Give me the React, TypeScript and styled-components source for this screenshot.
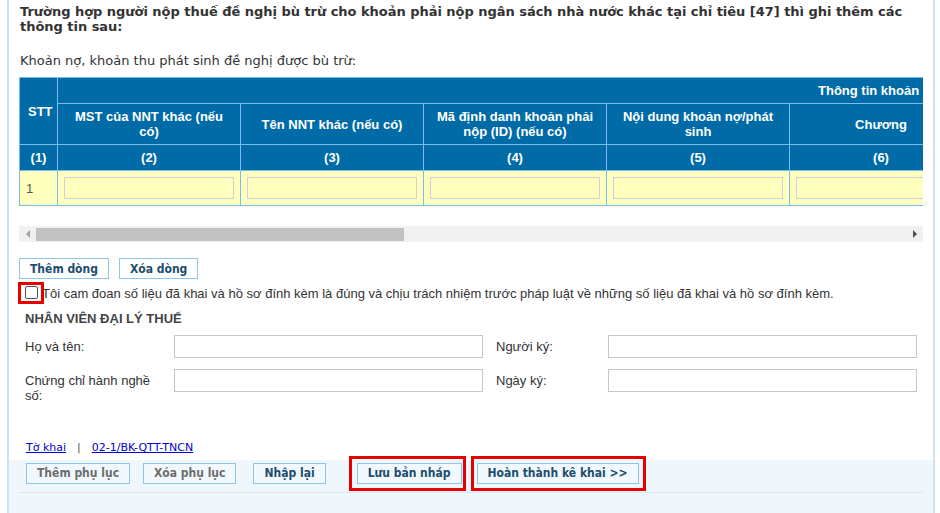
import React from 'react'
import styled, { createGlobalStyle } from 'styled-components'

const GlobalStyle = createGlobalStyle`
  html, body {
    margin: 0;
    padding: 0;
    background: #fff;
  }
  body {
    font-family: "Liberation Sans", Arial, sans-serif;
    color: #333;
  }
`

const Page = styled.div`
  width: 940px;
  height: 513px;
  overflow: hidden;
  box-sizing: border-box;
  padding: 0 5px 0 7px;
`

const Panel = styled.div`
  height: 100%;
  border-left: 2px solid #cbe3f6;
  border-right: 2px solid #cbe3f6;
  display: flex;
  flex-direction: column;
`

const Content = styled.div`
  padding: 0 10px;
  display: flex;
  flex-direction: column;
`

const Title = styled.div`
  font-family: "DejaVu Sans", Verdana, sans-serif;
  font-weight: bold;
  font-size: 13px;
  line-height: 15px;
  letter-spacing: -0.03px;
  color: #333;
  margin: 4px 0 0 1px;
`

const Subtitle = styled.div`
  font-family: "DejaVu Sans", Verdana, sans-serif;
  font-size: 13px;
  line-height: 15px;
  color: #333;
  margin: 19px 0 0 1px;
`

const TableWrap = styled.div`
  margin-top: 9px;
  width: 904px;
  overflow: hidden;
`

const Table = styled.table`
  border-collapse: collapse;
  table-layout: fixed;
  width: 1136px;
  font-size: 13px;
`

const Head = styled.th<{ $h?: number; $pl?: number }>`
  background: #006ba6;
  color: #fff;
  font-weight: bold;
  font-size: 13px;
  line-height: 15px;
  border: 1px solid #78bdf0;
  height: ${p => p.$h ?? 26}px;
  padding: 0 ${p => p.$pl ? 0 : 8}px 0 ${p => p.$pl ?? 8}px;
  text-align: ${p => p.$pl ? 'left' : 'center'};
  white-space: ${p => p.$pl ? 'nowrap' : 'normal'};
  vertical-align: middle;
  box-sizing: border-box;
`

const Cell = styled.td`
  background: #ffffbe;
  border: 1px solid #78bdf0;
  height: 35px;
  padding: 0 6px;
  color: #555;
  font-size: 13px;
  box-sizing: border-box;
`

const CellInput = styled.input`
  display: block;
  width: 100%;
  height: 22px;
  box-sizing: border-box;
  border: 1px solid #cfcfe0;
  background: #ffffbe;
  margin: 0;
  padding: 0 4px;
`

const ScrollTrack = styled.div`
  margin-top: 20px;
  height: 16px;
  background: #f1f1f1;
  display: flex;
  align-items: center;
`

const ScrollArrow = styled.div<{ $dark?: boolean }>`
  width: 17px;
  height: 16px;
  display: flex;
  align-items: center;
  justify-content: center;
  &::after {
    content: '';
    border-top: 4px solid transparent;
    border-bottom: 4px solid transparent;
    ${p => p.$dark
      ? 'border-left: 4px solid #505050;'
      : 'border-right: 4px solid #a3a3a3;'}
  }
`

const ScrollThumb = styled.div`
  width: 368px;
  height: 13px;
  background: #c1c1c1;
`

const ScrollRest = styled.div`
  flex: 1;
`

const ButtonRow = styled.div`
  display: flex;
  gap: 10px;
  margin-top: 16px;
`

const Button = styled.button<{ $muted?: boolean; $bg?: string }>`
  font-family: "DejaVu Sans Condensed", Tahoma, sans-serif;
  font-weight: bold;
  font-size: 12px;
  height: 21px;
  padding: 0 10px;
  border: 1px solid #8ac6ee;
  background: ${p => p.$bg ?? '#fff'};
  color: ${p => p.$muted ? '#6d6d6d' : '#1c4d6e'};
  margin: 0;
  cursor: pointer;
`

const CheckRow = styled.label`
  display: flex;
  align-items: center;
  font-size: 13px;
  color: #333;
  margin: 3px 0 0 -1px;
`

const RedFrame = styled.span<{ $pad?: string }>`
  display: inline-flex;
  border: 3px solid #e60000;
  padding: ${p => p.$pad ?? '0'};
`

const CheckFrame = styled(RedFrame)`
  margin-right: -2px;
`

const CheckBox = styled.span`
  width: 13px;
  height: 13px;
  box-sizing: border-box;
  border: 1px solid #555;
  border-radius: 2px;
  background: #fff;
`

const SectionHead = styled.div`
  font-weight: bold;
  font-size: 13px;
  color: #444;
  margin: 7px 0 0 6px;
`

const FormGrid = styled.div`
  display: grid;
  grid-template-columns: 149px 309px 125px 309px;
  row-gap: 11px;
  margin: 9px 0 0 6px;
`

const FieldLabel = styled.div<{ $gap?: boolean }>`
  font-size: 13px;
  line-height: 15px;
  color: #333;
  padding: 4px 15px 0 0;
  margin-left: ${p => p.$gap ? 13 : 0}px;
`

const FieldInput = styled.input`
  height: 23px;
  box-sizing: border-box;
  border: 1px solid #c6c6c6;
  margin: 0;
  width: 100%;
`

const Links = styled.div`
  font-family: "DejaVu Sans", Verdana, sans-serif;
  font-size: 11px;
  color: #555;
  margin: 38px 0 0 7px;
  display: flex;
  gap: 11px;
  height: 19px;
`

const Link = styled.a`
  color: #0000d6;
  text-decoration: underline;
`

const Footer = styled.div`
  flex: 1;
  background: #eff7fd;
  padding: 0 10px;
`

const FooterButtons = styled.div`
  display: flex;
  align-items: center;
  height: 28px;
  margin-top: -1px;
  padding-left: 7px;
`

const FooterLine = styled.div`
  height: 1px;
  background: #d5e9f8;
  margin-top: 5px;
`

const columns = [
  'MST của NNT khác (nếu có)',
  'Tên NNT khác (nếu có)',
  'Mã định danh khoản phải nộp (ID) (nếu có)',
  'Nội dung khoản nợ/phát sinh',
  'Chương',
  'Tiểu mục',
]

const App = () => (
  <Page>
    <GlobalStyle />
    <Panel>
      <Content>
        <Title>
          Trường hợp người nộp thuế đề nghị bù trừ cho khoản phải nộp ngân sách nhà nước khác tại chỉ tiêu [47] thì ghi thêm các thông tin sau:
        </Title>
        <Subtitle>Khoản nợ, khoản thu phát sinh đề nghị được bù trừ:</Subtitle>
        <TableWrap>
          <Table>
            <colgroup>
              <col style={{ width: 38 }} />
              {columns.map(c => <col key={c} style={{ width: 183 }} />)}
            </colgroup>
            <thead>
              <tr>
                <Head rowSpan={2}>STT</Head>
                <Head colSpan={columns.length} $pl={760}>Thông tin khoản phải nộp</Head>
              </tr>
              <tr>
                {columns.map(c => <Head key={c} $h={41}>{c}</Head>)}
              </tr>
              <tr>
                <Head>(1)</Head>
                {columns.map((c, i) => <Head key={c}>({i + 2})</Head>)}
              </tr>
            </thead>
            <tbody>
              <tr>
                <Cell>1</Cell>
                {columns.map(c => (
                  <Cell key={c}><CellInput /></Cell>
                ))}
              </tr>
            </tbody>
          </Table>
        </TableWrap>
        <ScrollTrack>
          <ScrollArrow />
          <ScrollThumb />
          <ScrollRest />
          <ScrollArrow $dark />
        </ScrollTrack>
        <ButtonRow>
          <Button>Thêm dòng</Button>
          <Button>Xóa dòng</Button>
        </ButtonRow>
        <CheckRow>
          <CheckFrame $pad="1px 3px 2px 4px"><CheckBox /></CheckFrame>
          Tôi cam đoan số liệu đã khai và hồ sơ đính kèm là đúng và chịu trách nhiệm trước pháp luật về những số liệu đã khai và hồ sơ đính kèm.
        </CheckRow>
        <SectionHead>NHÂN VIÊN ĐẠI LÝ THUẾ</SectionHead>
        <FormGrid>
          <FieldLabel>Họ và tên:</FieldLabel>
          <FieldInput />
          <FieldLabel $gap>Người ký:</FieldLabel>
          <FieldInput />
          <FieldLabel>Chứng chỉ hành nghề số:</FieldLabel>
          <FieldInput />
          <FieldLabel $gap>Ngày ký:</FieldLabel>
          <FieldInput />
        </FormGrid>
        <Links>
          <Link>Tờ khai</Link>
          <span>|</span>
          <Link>02-1/BK-QTT-TNCN</Link>
        </Links>
      </Content>
      <Footer>
        <FooterButtons>
          <Button $muted $bg="#f2f9fe">Thêm phụ lục</Button>
          <Button $muted $bg="#f2f9fe" style={{ marginLeft: 13 }}>Xóa phụ lục</Button>
          <Button $bg="#f2f9fe" style={{ marginLeft: 17 }}>Nhập lại</Button>
          <RedFrame $pad="4px 1px 4px 5px" style={{ marginLeft: 23 }}>
            <Button $bg="#f2f9fe">Lưu bản nháp</Button>
          </RedFrame>
          <RedFrame $pad="4px 4px 4px 3px" style={{ marginLeft: 5 }}>
            <Button $bg="#f2f9fe">Hoàn thành kê khai &gt;&gt;</Button>
          </RedFrame>
        </FooterButtons>
        <FooterLine />
      </Footer>
    </Panel>
  </Page>
)

export default App
